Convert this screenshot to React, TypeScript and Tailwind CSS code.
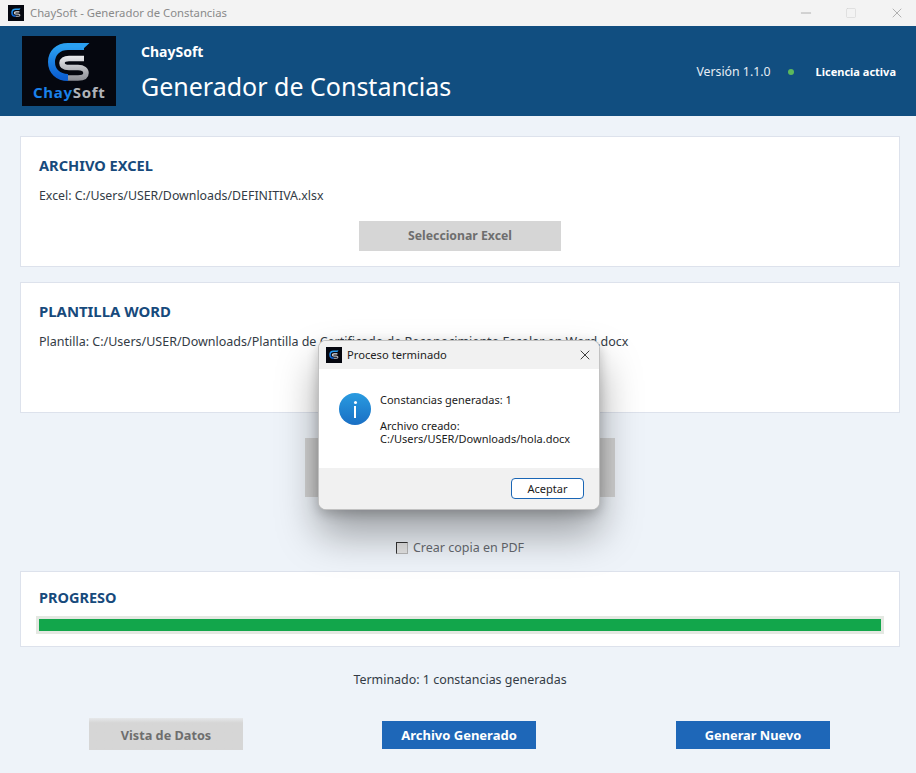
import { Minus, Square, X } from 'lucide-react';

function LogoMark({ className, viewBox = '0 0 94 70' }: { className?: string; viewBox?: string }) {
  return (
    <svg viewBox={viewBox} className={className}>
      <defs>
        <linearGradient id="csBlue" x1="0" y1="0" x2="0" y2="1">
          <stop offset="0" stopColor="#2aa0f2" />
          <stop offset="1" stopColor="#0b5fd2" />
        </linearGradient>
        <linearGradient id="csGray" gradientUnits="userSpaceOnUse" x1="0" y1="18" x2="0" y2="46">
          <stop offset="0" stopColor="#f2f2f4" />
          <stop offset="1" stopColor="#85878e" />
        </linearGradient>
      </defs>
      <path d="M62 10.5H46C36 10.5 29.5 17 29.5 26C29.5 35 36 41.5 46 41.5" fill="none" stroke="url(#csBlue)" strokeWidth="7" />
      <polygon points="60,7 67.5,7 60,14" fill="#2aa0f2" />
      <path d="M62 22.5H47C42.5 22.5 40 24.5 40 27C40 30 42.5 31.5 47 31.5H56C61.5 31.5 64 34 64 37C64 40 61.5 42 56 42H46" fill="none" stroke="url(#csGray)" strokeWidth="5.5" />
    </svg>
  );
}

function AppIcon() {
  return (
    <div className="w-4 h-4 shrink-0 bg-[#05070f]">
      <LogoMark viewBox="12 -8 70 70" className="w-full h-full" />
    </div>
  );
}

export default function App() {
  return (
    <div className='relative w-[916px] h-[773px] overflow-hidden bg-[#eef3f9] font-["Noto_Sans",sans-serif]'>
      <div className="h-[26px] bg-[#f3f3f3] flex items-center pl-2">
        <AppIcon />
        <span className="ml-[6px] text-[11.3px] text-[#8a8a8a]">ChaySoft - Generador de Constancias</span>
        <div className="ml-auto flex items-center text-[#8f8f8f]">
          <Minus size={16} strokeWidth={1} className="mr-[31px]" />
          <Square size={12} strokeWidth={1.2} className="mr-[32px] text-[#d4d4d4]" />
          <X size={16} strokeWidth={1} className="mr-[11px]" />
        </div>
      </div>

      <header className="h-[90px] bg-[#114e80] flex items-center pl-[22px] pr-5 text-white">
        <div className="relative w-[94px] h-[70px] bg-[#05070f]">
          <LogoMark className="w-full h-full" />
          <div className="absolute left-[11px] top-[46px] text-[15px] leading-5 font-bold tracking-[0.7px] whitespace-nowrap">
            <span className="text-[#1a80ea]">Chay</span>
            <span className="text-[#b0b2b8]">Soft</span>
          </div>
        </div>
        <div className="ml-[25px] mt-[2px]">
          <div className="text-[14px] leading-5 font-bold">ChaySoft</div>
          <div className="text-[25px] leading-[34px] mt-[7px]">Generador de Constancias</div>
        </div>
        <div className="ml-auto mt-[2px] flex items-center">
          <span className="text-[12.3px] text-[#e6edf4]">Versión 1.1.0</span>
          <span className="w-[6px] h-[6px] rounded-full bg-[#5cb85c] ml-[17px]" />
          <span className="text-[11px] font-bold ml-[22px]">Licencia activa</span>
        </div>
      </header>

      <main className="pl-5 pr-4 pt-5">
        <section className="h-[131px] bg-white border border-[#dde2ec] px-[18px] pt-[18px]">
          <h2 className="text-[14.6px] leading-5 font-bold text-[#174a7c]">ARCHIVO EXCEL</h2>
          <p className="mt-[12px] text-[12.35px] leading-[18px] text-[#333b45]">Excel: C:/Users/USER/Downloads/DEFINITIVA.xlsx</p>
          <div className="mt-[16px] flex justify-center">
            <div className="w-[202px] h-[30px] pt-[1px] bg-[#d6d6d6] flex items-center justify-center text-[12.25px] font-bold text-[#6e6e6e]">
              Seleccionar Excel
            </div>
          </div>
        </section>

        <section className="h-[131px] mt-[15px] bg-white border border-[#dde2ec] px-[18px] pt-[18px]">
          <h2 className="text-[14.9px] leading-5 font-bold text-[#174a7c]">PLANTILLA WORD</h2>
          <p className="mt-[12px] text-[12.5px] leading-[18px] text-[#333b45]">
            Plantilla: C:/Users/USER/Downloads/Plantilla de Certificado de Reconocimiento Escolar en Word.docx
          </p>
        </section>

        <div className="mt-[25px] flex justify-center">
          <div className="w-[310px] h-[59px] bg-[#d2d2d2]" />
        </div>

        <label className="mt-[36px] h-[30px] flex items-center justify-center text-[12.5px] text-[#666a70]">
          <span className="w-3 h-3 mr-[5px] border border-t-[#333] border-l-[#333] border-r-[#b5b5b5] border-b-[#b5b5b5] bg-[#e4e4e4]" />
          Crear copia en PDF
        </label>

        <section className="h-[76px] mt-[8px] bg-white border border-[#dde2ec] px-[18px] pt-[15px]">
          <h2 className="text-[14.5px] leading-5 font-bold text-[#174a7c]">PROGRESO</h2>
          <div className="mt-[9px] -mx-[3px] h-[18px] bg-[#e4e8e2] p-[3px]">
            <div className="h-full bg-[#12a64b]" />
          </div>
        </section>

        <p className="mt-[24px] text-center text-[12.45px] leading-[18px] text-[#333b45]">Terminado: 1 constancias generadas</p>

        <div className="mt-[29px] flex items-end pl-[69px]">
          <div className="w-[154px] h-[32px] pt-[3px] bg-gradient-to-b from-[#e6e8ea] to-[#d6d6d6] to-[15%] flex items-center justify-center text-[12.7px] font-bold text-[#6e6e6e]">
            Vista de Datos
          </div>
          <div className="w-[154px] h-[28px] pt-[1px] ml-[139px] mb-[1px] bg-[#1e67b8] flex items-center justify-center text-[13px] font-bold text-white">
            Archivo Generado
          </div>
          <div className="w-[154px] h-[28px] pt-[1px] ml-[140px] mb-[1px] bg-[#1e67b8] flex items-center justify-center text-[12.8px] font-bold text-white">
            Generar Nuevo
          </div>
        </div>
      </main>

      {/* dialogo encima de la ventana */}
      <div className="absolute left-[318px] top-[340px] w-[282px] h-[170px] rounded-lg overflow-hidden bg-white flex flex-col border border-[#9a9a9a]/60 shadow-[0_24px_40px_rgba(0,0,0,0.35),0_4px_12px_rgba(0,0,0,0.2)]">
        <div className="h-[28px] shrink-0 bg-[#f1f1f1] flex items-center pl-[7px] pr-[6px]">
          <AppIcon />
          <span className="ml-[5px] text-[11.2px] text-[#222]">Proceso terminado</span>
          <X size={16} strokeWidth={1.3} className="ml-auto text-[#222]" />
        </div>
        <div className="flex-1 flex pl-[20px] pt-[24px]">
          <div className="w-8 h-8 rounded-full bg-gradient-to-b from-[#2a9be0] to-[#1a6fc4] flex items-center justify-center shrink-0">
            <div className="flex flex-col items-center">
              <span className="w-[3px] h-[3px] rounded-full bg-white" />
              <span className="w-[2px] h-[12px] bg-white mt-[2px]" />
            </div>
          </div>
          <div className="ml-[9px] text-[11px] leading-[13px] text-[#1b1b1b]">
            <p>Constancias generadas: 1</p>
            <p className="mt-[13px]">Archivo creado:</p>
            <p>C:/Users/USER/Downloads/hola.docx</p>
          </div>
        </div>
        <div className="h-[41px] shrink-0 bg-[#f1f1f1] flex items-center justify-end pr-[15px]">
          <div className="w-[73px] h-[21px] pt-[1px] rounded-[4px] border border-[#1a66b5] bg-white flex items-center justify-center text-[11px] text-[#1b1b1b]">
            Aceptar
          </div>
        </div>
      </div>
    </div>
  );
}
